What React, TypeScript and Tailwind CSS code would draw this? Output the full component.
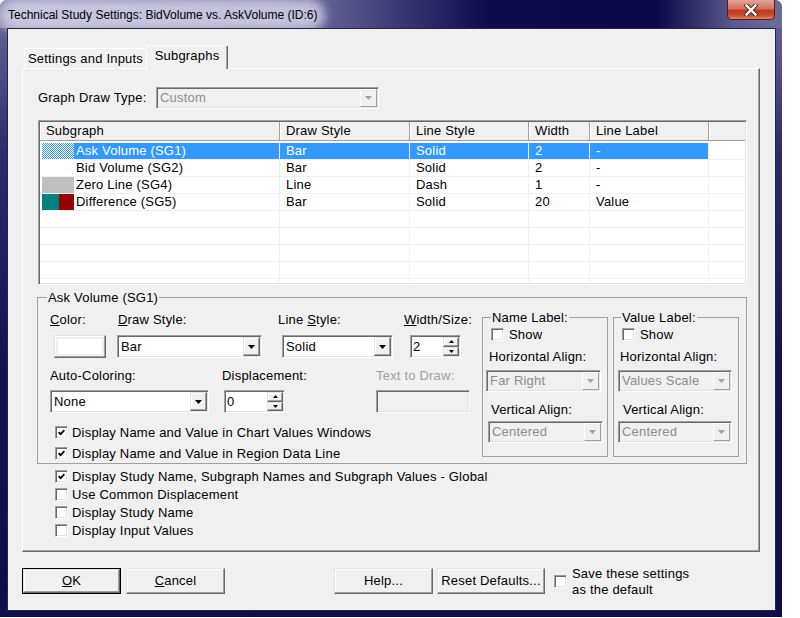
import type { ReactNode } from "react";

const sunken =
  "border border-t-[#a0a0a0] border-l-[#a0a0a0] border-r-white border-b-white shadow-[inset_1px_1px_0_#696969,inset_-1px_-1px_0_#e3e3e3]";
const raised =
  "border border-t-[#e3e3e3] border-l-[#e3e3e3] border-r-[#696969] border-b-[#696969] shadow-[inset_-1px_-1px_0_#a0a0a0,inset_1px_1px_0_#fff]";
const flatRaised = "border border-t-white border-l-white border-r-[#a0a0a0] border-b-[#a0a0a0]";

function Arrow({ color = "#000", up = false, small = false }: { color?: string; up?: boolean; small?: boolean }) {
  const w = small ? 5 : 7;
  const h = small ? 3 : 4;
  const pts = up ? `0,${h} ${w},${h} ${w / 2},0` : `0,0 ${w},0 ${w / 2},${h}`;
  return (
    <svg width={w} height={h} viewBox={`0 0 ${w} ${h}`}>
      <polygon points={pts} fill={color} />
    </svg>
  );
}

function Combo({ className, value, disabled }: { className: string; value: string; disabled?: boolean }) {
  return (
    <div className={`${sunken} flex p-px ${disabled ? "bg-[#f0f0f0] text-[#8d8d8d]" : "bg-white"} ${className}`}>
      <div className="flex-1 pl-[2px] flex items-center whitespace-nowrap overflow-hidden">{value}</div>
      <div className={`w-[17px] flex items-center justify-center bg-[#f0f0f0] ${disabled ? flatRaised : raised}`}>
        <Arrow color={disabled ? "#a0a0a0" : "#000"} />
      </div>
    </div>
  );
}

function Spin({ className, value }: { className: string; value: string }) {
  return (
    <div className={`${sunken} flex p-px bg-white ${className}`}>
      <div className="flex-1 pl-px flex items-center">{value}</div>
      <div className="w-[16px] flex flex-col">
        <div className={`flex-1 flex items-center justify-center bg-[#f0f0f0] ${raised}`}>
          <Arrow up small />
        </div>
        <div className={`flex-1 flex items-center justify-center bg-[#f0f0f0] ${raised}`}>
          <Arrow small />
        </div>
      </div>
    </div>
  );
}

function Check({ checked }: { checked?: boolean }) {
  return (
    <div className={`w-[13px] h-[13px] shrink-0 bg-white flex items-center justify-center ${sunken}`}>
      {checked && (
        <svg width="7" height="7" viewBox="0 0 7 7">
          <path d="M0.6 3.2 L2.6 5.2 L6.4 1.2" stroke="#000" strokeWidth="1.7" fill="none" />
        </svg>
      )}
    </div>
  );
}

function CheckRow({ label, checked, className }: { label: string; checked?: boolean; className: string }) {
  return (
    <div className={`flex items-center gap-[4px] h-[16px] ${className}`}>
      <Check checked={checked} />
      <span className="leading-[15px] whitespace-nowrap">{label}</span>
    </div>
  );
}

function Btn({ className, children, isDefault }: { className: string; children: ReactNode; isDefault?: boolean }) {
  if (isDefault) {
    return (
      <div className={`border border-black flex ${className}`}>
        <div className={`flex-1 flex items-center justify-center bg-[#f0f0f0] ${raised}`}>{children}</div>
      </div>
    );
  }
  return <div className={`flex items-center justify-center bg-[#f0f0f0] ${raised} ${className}`}>{children}</div>;
}

const cols = ["w-[240px]", "w-[130px]", "w-[119px]", "w-[61px]", "w-[119px]"];

type Row = { name: string; draw: string; line: string; width: string; label: string; swatch: ReactNode; selected?: boolean };

const rows: Row[] = [
  {
    name: "Ask Volume (SG1)",
    draw: "Bar",
    line: "Solid",
    width: "2",
    label: "-",
    selected: true,
    swatch: <div className="w-[32px] h-[16px] bg-[repeating-conic-gradient(#3399ff_0%_25%,#ffffff_0%_50%)] bg-[length:2px_2px]" />,
  },
  { name: "Bid Volume (SG2)", draw: "Bar", line: "Solid", width: "2", label: "-", swatch: <div className="w-[32px] h-[16px] bg-white" /> },
  { name: "Zero Line (SG4)", draw: "Line", line: "Dash", width: "1", label: "-", swatch: <div className="w-[32px] h-[16px] bg-[#c0c0c0]" /> },
  {
    name: "Difference (SG5)",
    draw: "Bar",
    line: "Solid",
    width: "20",
    label: "Value",
    swatch: (
      <div className="w-[32px] h-[16px] flex">
        <div className="w-[17px] bg-[#008080]" />
        <div className="flex-1 bg-[#990000]" />
      </div>
    ),
  },
];

function SubgraphTable() {
  const headers = ["Subgraph", "Draw Style", "Line Style", "Width", "Line Label"];
  return (
    <div className={`ml-[15px] mt-[11px] w-[709px] h-[165px] bg-white p-px overflow-hidden ${sunken}`}>
      <div className="flex h-[19px] bg-[#f0f0f0] border-b border-[#a0a0a0]">
        {headers.map((h, i) => (
          <div
            key={h}
            className={`${cols[i]} shrink-0 pl-[6px] flex items-center border-r border-[#a0a0a0] shadow-[inset_1px_0_0_#fff]`}
          >
            {h}
          </div>
        ))}
        <div className="flex-1 shadow-[inset_1px_0_0_#fff]" />
      </div>
      <div className="mt-[2px]">
        {rows.map((r) => {
          const sel = r.selected ? "bg-[#3399ff] text-white" : "";
          return (
            <div key={r.name} className="flex h-[17px] border-b border-[#f0f0f0]">
              <div className={`${cols[0]} shrink-0 flex border-r border-[#f0f0f0]`}>
                <div className="ml-[2px]">{r.swatch}</div>
                <div className={`flex-1 pl-[2px] flex items-center ${sel}`}>{r.name}</div>
              </div>
              {[r.draw, r.line, r.width, r.label].map((v, i) => (
                <div key={i} className={`${cols[i + 1]} shrink-0 pl-[6px] flex items-center border-r border-[#f0f0f0] ${sel}`}>
                  {v}
                </div>
              ))}
              <div className="flex-1" />
            </div>
          );
        })}
        {[0, 1, 2, 3, 4, 5].map((i) => (
          <div key={i} className="flex h-[17px] border-b border-[#f0f0f0]">
            {cols.map((c, j) => (
              <div key={j} className={`${c} shrink-0 border-r border-[#f0f0f0]`} />
            ))}
            <div className="flex-1" />
          </div>
        ))}
      </div>
    </div>
  );
}

function LabelGroup({ title, h, v, variant }: { title: string; h: string; v: string; variant: "name" | "value" }) {
  const n = variant === "name";
  return (
    <fieldset className="w-[126px] h-[147px] border border-[#a0a0a0]">
      <legend className={`${n ? "ml-[8px]" : "ml-[7px]"} px-px leading-[15px]`}>{title}</legend>
      <div className="flex flex-col items-start">
        <CheckRow label="Show" className="mt-[1px] ml-[8px] gap-[5px]" />
        <div className="mt-[7px] leading-[15px] ml-[6px]">Horizontal Align:</div>
        <Combo className={`mt-[6px] h-[22px] ${n ? "ml-[3px] w-[115px]" : "ml-[4px] w-[114px]"}`} value={h} disabled />
        <div className={`mt-[10px] leading-[15px] ${n ? "ml-[8px]" : "ml-[9px]"}`}>Vertical Align:</div>
        <Combo className={`mt-[4px] h-[22px] ${n ? "ml-[5px] w-[115px]" : "ml-[4px] w-[114px]"}`} value={v} disabled />
      </div>
    </fieldset>
  );
}

function SubgraphGroup() {
  return (
    <fieldset className="ml-[14px] mt-[5px] w-[710px] h-[174px] border border-[#a0a0a0]">
      <legend className="ml-[9px] px-px leading-[15px]">Ask Volume (SG1)</legend>
      <div className="flex">
        <div className="w-[444px] flex flex-col">
          <div className="flex mt-[7px] pl-[12px] leading-[15px]">
            <div className="w-[68px]">
              <span className="underline">C</span>olor:
            </div>
            <div className="w-[160px]">
              <span className="underline">D</span>raw Style:
            </div>
            <div className="w-[126px]">
              Line <span className="underline">S</span>tyle:
            </div>
            <div>
              <span className="underline">W</span>idth/Size:
            </div>
          </div>
          <div className="flex mt-[8px]">
            <div className={`ml-[16px] w-[52px] h-[23px] p-[3px] bg-[#f0f0f0] ${raised}`}>
              <div className="w-full h-full bg-white" />
            </div>
            <Combo className="ml-[11px] w-[145px] h-[23px]" value="Bar" />
            <Combo className="ml-[20px] w-[111px] h-[23px]" value="Solid" />
            <Spin className="ml-[17px] w-[51px] h-[23px]" value="2" />
          </div>
          <div className="flex mt-[10px] pl-[12px] leading-[15px]">
            <div className="w-[172px]">Auto-Coloring:</div>
            <div className="w-[154px]">Displacement:</div>
            <div className="text-[#a0a0a0]">Text to Draw:</div>
          </div>
          <div className="flex mt-[7px]">
            <Combo className="ml-[12px] w-[159px] h-[23px]" value="None" />
            <Spin className="ml-[15px] w-[61px] h-[23px]" value="0" />
            <div className={`ml-[91px] w-[94px] h-[23px] bg-[#f0f0f0] ${sunken}`} />
          </div>
          <CheckRow checked label="Display Name and Value in Chart Values Windows" className="ml-[17px] mt-[11px]" />
          <CheckRow checked label="Display Name and Value in Region Data Line" className="ml-[17px] mt-[5px]" />
        </div>
        <div className="flex gap-[5px] mt-[5px]">
          <LabelGroup title="Name Label:" h="Far Right" v="Centered" variant="name" />
          <LabelGroup title="Value Label:" h="Values Scale" v="Centered" variant="value" />
        </div>
      </div>
    </fieldset>
  );
}

export default function App() {
  return (
    <div className="w-[800px] h-[618px] bg-white font-['Liberation_Sans',Arial,sans-serif] text-[13px] tracking-[0.2px] text-black">
      <div className="w-[782px] h-[617px] rounded-t-[7px] flex flex-col bg-[linear-gradient(to_bottom,#6e6c9a_0%,#2c2a68_25%,#14124f_60%,#0f0d4a_100%)]">
        <div className="h-[28px] shrink-0 flex items-start rounded-t-[7px] bg-[linear-gradient(to_right,#8f8db5_0%,#7c7aa6_35%,#3f3d78_50%,#0e0c4c_62%,#0a0848_84%,#5c5a8c_94%,#6d6b98_100%)]">
          <span className="ml-[8px] mt-[7px] text-[12px] tracking-normal leading-[16px] rounded-[10px] bg-[rgba(214,213,232,0.8)] shadow-[0_0_10px_8px_rgba(214,213,232,0.8)]">
            Technical Study Settings: BidVolume vs. AskVolume (ID:6)
          </span>
          <div className="ml-auto mr-[7px] w-[48px] h-[20px] rounded-b-[5px] border border-t-0 border-[#5a1a14] flex items-center justify-center bg-[linear-gradient(to_bottom,#e2a699_0%,#d2705c_45%,#c0381f_55%,#c64a30_80%,#e0866a_100%)]">
            <svg width="14" height="12" viewBox="0 0 14 12">
              <path d="M2.5 1.5 L11.5 10.5 M11.5 1.5 L2.5 10.5" stroke="#4a2a26" strokeWidth="4.2" strokeLinecap="square" />
              <path d="M2.5 1.5 L11.5 10.5 M11.5 1.5 L2.5 10.5" stroke="#fff" strokeWidth="2.4" strokeLinecap="square" />
            </svg>
          </div>
        </div>
        <div className="flex-1 pl-[7px] pr-[6px] pb-[6px] flex">
          <div className="flex-1 border border-[#24234a] bg-[#f0f0f0] flex flex-col">
            <div className="mt-[16px] ml-[16px] h-[23px] flex items-end leading-[15px]">
              <div className="w-[123px] h-[20px] pt-[2px] text-center rounded-t-[2px] border-t border-l border-r border-t-white border-l-white border-r-[#696969]">
                Settings and Inputs
              </div>
              <div className="-ml-px w-[82px] h-[24px] -mb-px relative z-10 bg-[#f0f0f0] pt-[2px] text-center rounded-t-[2px] border-t border-l border-r border-t-white border-l-white border-r-[#696969] shadow-[inset_-1px_0_0_#a0a0a0]">
                Subgraphs
              </div>
            </div>
            <div className="ml-[14px] w-[738px] h-[484px] flex flex-col border border-t-white border-l-white border-r-[#696969] border-b-[#696969] shadow-[inset_-1px_-1px_0_#a0a0a0]">
              <div className="flex items-center mt-[18px] ml-[15px]">
                <div className="w-[118px]">Graph Draw Type:</div>
                <Combo className="w-[223px] h-[22px]" value="Custom" disabled />
              </div>
              <SubgraphTable />
              <SubgraphGroup />
              <div className="flex flex-col mt-[4px] ml-[32px] gap-[2px]">
                <CheckRow checked label="Display Study Name, Subgraph Names and Subgraph Values - Global" className="" />
                <CheckRow label="Use Common Displacement" className="" />
                <CheckRow label="Display Study Name" className="" />
                <CheckRow label="Display Input Values" className="" />
              </div>
            </div>
            <div className="flex mt-[16px] ml-[14px] items-start">
              <Btn isDefault className="w-[99px] h-[26px]">
                <span>
                  <span className="underline">O</span>K
                </span>
              </Btn>
              <Btn className="ml-[5px] w-[99px] h-[26px]">
                <span>
                  <span className="underline">C</span>ancel
                </span>
              </Btn>
              <Btn className="ml-[109px] w-[99px] h-[26px]">Help...</Btn>
              <Btn className="ml-[4px] w-[108px] h-[26px]">Reset Defaults...</Btn>
              <div className="ml-[9px] mt-[7px]">
                <Check />
              </div>
              <div className="ml-[5px] -mt-[2px] leading-[16px]">
                Save these settings
                <br />
                as the default
              </div>
            </div>
          </div>
        </div>
      </div>
    </div>
  );
}
